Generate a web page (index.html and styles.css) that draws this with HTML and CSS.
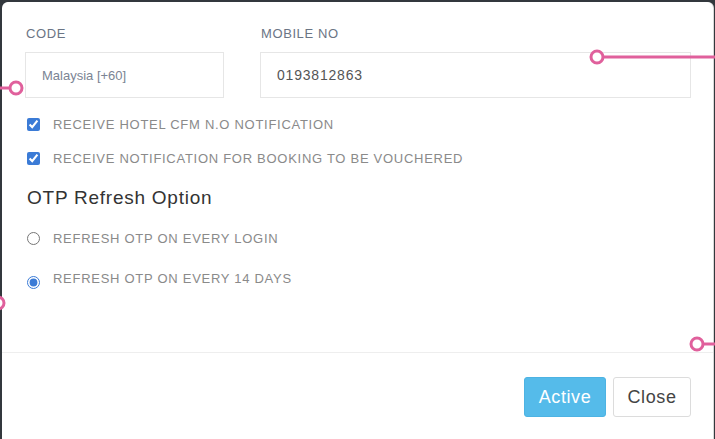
FILE: index.html
```html
<!DOCTYPE html>
<html>
<head>
<meta charset="utf-8">
<link rel="stylesheet" href="styles.css">
</head>
<body>
<div class="modal">
  <div class="modal-body">
    <div class="fields">
      <div class="field field-code">
        <div class="label">CODE</div>
        <div class="input input-code">Malaysia [+60]</div>
      </div>
      <div class="field field-mobile">
        <div class="label">MOBILE NO</div>
        <div class="input input-mobile">0193812863</div>
      </div>
    </div>
    <label class="check-row first"><input type="checkbox" checked><span>RECEIVE HOTEL CFM N.O NOTIFICATION</span></label>
    <label class="check-row"><input type="checkbox" checked><span>RECEIVE NOTIFICATION FOR BOOKING TO BE VOUCHERED</span></label>
    <h3 class="heading">OTP Refresh Option</h3>
    <label class="radio-row first"><input type="radio" name="otp"><span>REFRESH OTP ON EVERY LOGIN</span></label>
    <label class="radio-row second"><input type="radio" name="otp" checked><span>REFRESH OTP ON EVERY 14 DAYS</span></label>
  </div>
  <div class="modal-footer">
    <button class="btn btn-active">Active</button>
    <button class="btn btn-close">Close</button>
  </div>
</div>
<svg class="markers" width="715" height="439" viewBox="0 0 715 439">
  <g fill="#fff" stroke="#e0609c" stroke-width="3">
    <line x1="0" y1="88" x2="10" y2="88"/>
    <circle cx="16" cy="88" r="6"/>
    <line x1="603" y1="57" x2="715" y2="57"/>
    <circle cx="597" cy="57" r="6"/>
    <circle cx="-2" cy="303" r="6"/>
    <line x1="703" y1="344" x2="715" y2="344"/>
    <circle cx="697" cy="344" r="6"/>
  </g>
</svg>
</body>
</html>
```
FILE: styles.css
```css
html, body {
  margin: 0;
  padding: 0;
}
body {
  width: 715px;
  height: 439px;
  overflow: hidden;
  background: #33383d;
  font-family: "Liberation Sans", Arial, sans-serif;
  position: relative;
}
.modal {
  margin: 2px 0 0 2px;
  width: 711px;
  height: 445px;
  background: #fff;
  border-radius: 6px 6px 0 0;
  box-shadow: 1px 0 0 #d8d8d8;
}
.modal-body {
  box-sizing: border-box;
  height: 350px;
  padding: 24px 22px 0 23px;
}
.fields {
  display: flex;
  gap: 36px;
}
.field-code { width: 199px; }
.field-mobile { width: 431px; }
.label {
  font-size: 13px;
  line-height: 16px;
  color: #6b7585;
  margin-bottom: 10px;
  letter-spacing: 0.6px;
  padding-left: 1px;
}
.input {
  box-sizing: border-box;
  height: 46px;
  border: 1px solid #e6e6e6;
  display: flex;
  align-items: center;
  padding-left: 16px;
}
.input-code {
  font-size: 13px;
  color: #7b8494;
}
.input-mobile {
  font-size: 14px;
  letter-spacing: 0.8px;
  color: #555;
}
.check-row, .radio-row {
  display: flex;
  align-items: center;
  height: 33px;
  font-size: 13px;
  letter-spacing: 0.72px;
  color: #8a8a8a;
}
.check-row.first { margin-top: 10px; }
.check-row.first + .check-row { height: 34px; }
.check-row input, .radio-row input {
  margin: 0 13px 0 2px;
  width: 13px;
  height: 13px;
  accent-color: #3b7bd6;
}
.heading {
  margin: 11px 0 0 2px;
  font-size: 19px;
  font-weight: normal;
  line-height: 24px;
  letter-spacing: 0.75px;
  color: #333;
}
.radio-row { height: 40px; }
.radio-row.first { margin-top: 8px; }
.radio-row.second input { margin-top: 8px; }
.modal-footer {
  border-top: 1px solid #eeeeee;
  display: flex;
  justify-content: flex-end;
  gap: 7px;
  padding: 24px 22px 0 0;
}
.btn {
  box-sizing: border-box;
  height: 40px;
  font-family: "Liberation Sans", Arial, sans-serif;
  font-size: 18px;
  letter-spacing: 0.6px;
  border-radius: 3px;
  padding: 0;
}
.btn-active {
  width: 82px;
  background: #55bbea;
  border: 1px solid #4db3e3;
  color: #fff;
}
.btn-close {
  width: 78px;
  background: #fff;
  border: 1px solid #dcdcdc;
  color: #444;
}
.markers {
  position: absolute;
  left: 0;
  top: 0;
  pointer-events: none;
}
```
